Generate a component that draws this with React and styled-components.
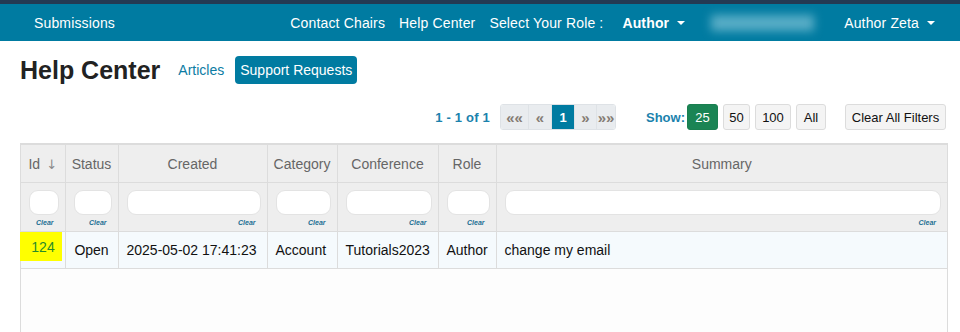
import React from 'react';
import styled, { createGlobalStyle } from 'styled-components';

const GlobalStyle = createGlobalStyle`
  body {
    margin: 0;
    background: #fff;
    font-family: "Liberation Sans", Arial, sans-serif;
    font-size: 14px;
    color: #111;
  }
`;

const TopStrip = styled.div`
  height: 4px;
  background: #243a53;
`;

const NavBar = styled.nav`
  height: 37px;
  background: #007ba1;
  display: flex;
  align-items: center;
  padding: 0 25px 0 34px;
  color: #fff;
  font-size: 14px;
  letter-spacing: 0.15px;
`;

const NavLeft = styled.div`
  flex: 1;
`;

const NavItem = styled.span`
  margin-left: ${p => p.gap ?? 15}px;
  font-weight: ${p => (p.bold ? 700 : 400)};
  display: inline-flex;
  align-items: center;
  white-space: nowrap;
`;

const Caret = styled.span`
  display: inline-block;
  margin-left: 8px;
  width: 0;
  height: 0;
  border-left: 4px solid transparent;
  border-right: 4px solid transparent;
  border-top: 4px solid #fff;
`;

const Blurred = styled.span`
  display: inline-block;
  margin-left: 26px;
  width: 103px;
  height: 16px;
  background: rgba(160, 215, 230, 0.55);
  filter: blur(5px);
`;

const Page = styled.div`
  padding: 0 12px 0 20px;
`;

const TitleRow = styled.div`
  display: flex;
  align-items: center;
  height: 58px;
`;

const Title = styled.h1`
  margin: 0;
  font-size: 25px;
  font-weight: 700;
  color: #222;
`;

const TabLink = styled.span`
  margin-left: ${p => p.gap}px;
  font-size: 14px;
  padding: 5px ${p => (p.active ? 5 : 4)}px;
  border-radius: 4px;
  color: ${p => (p.active ? '#fff' : '#0c7ca3')};
  background: ${p => (p.active ? '#007ba1' : 'transparent')};
  line-height: 18px;
`;

const ToolRow = styled.div`
  display: flex;
  justify-content: flex-end;
  align-items: center;
  height: 26px;
  margin-top: 5px;
  padding-right: 2px;
`;

const CountText = styled.span`
  color: #1b82ad;
  font-weight: 700;
  font-size: 13px;
  letter-spacing: 0.2px;
  margin-right: 10px;
`;

const Pager = styled.div`
  display: flex;
  height: 26px;
  border: 1px solid #dee2e6;
  border-radius: 3px;
  overflow: hidden;
  box-sizing: border-box;
`;

const PageBtn = styled.span`
  width: ${p => p.w}px;
  display: flex;
  align-items: center;
  justify-content: center;
  font-size: ${p => (p.active ? 13 : 15)}px;
  font-weight: 700;
  color: ${p => (p.active ? '#fff' : '#857c74')};
  background: ${p => (p.active ? '#007ba1' : '#e9ecef')};
  border-left: ${p => (p.first ? 'none' : '1px solid #dee2e6')};
  box-sizing: border-box;
`;

const ShowLabel = styled.span`
  color: #1b82ad;
  font-weight: 700;
  font-size: 13px;
  margin-left: 30px;
  margin-right: 2px;
`;

const SizeBtn = styled.span`
  box-sizing: border-box;
  height: 26px;
  width: ${p => p.w}px;
  margin-left: ${p => p.gap ?? 5}px;
  display: flex;
  align-items: center;
  justify-content: center;
  border-radius: 3px;
  font-size: 13px;
  white-space: nowrap;
  border: 1px solid ${p => (p.active ? '#1a7f50' : '#dcdcdc')};
  background: ${p => (p.active ? '#1a8454' : '#f4f4f4')};
  color: ${p => (p.active ? '#fff' : '#111')};
`;

const TableWrap = styled.div`
  margin-top: 13px;
  border: 1px solid #dcdcdc;
  border-top-width: 2px;
  height: 200px;
  width: 926px;
  background: #fdfdfd;
`;

const Table = styled.table`
  border-collapse: collapse;
  table-layout: fixed;
  width: 100%;
`;

const Th = styled.th`
  background: #eeeeee;
  color: #666;
  font-weight: 400;
  font-size: 14px;
  height: 37px;
  padding: 0;
  text-align: center;
  border-right: 1px solid #dcdcdc;
  border-bottom: 1px solid #dcdcdc;
  &:last-child { border-right: none; }
`;

const SortArrow = styled.span`
  margin-left: 6px;
  color: #8a8a8a;
  font-family: "DejaVu Sans", sans-serif;
  font-size: 13px;
`;

const FilterCell = styled.td`
  background: #eeeeee;
  height: 49px;
  padding: 7px 6px 0 8px;
  vertical-align: top;
  box-sizing: border-box;
  border-right: 1px solid #dcdcdc;
  border-bottom: 1px solid #dcdcdc;
  &:last-child { border-right: none; }
`;

const FilterInput = styled.div`
  height: 25px;
  background: #fff;
  border: 1px solid #e3e3e3;
  border-radius: 9px;
  box-sizing: border-box;
`;

const ClearLink = styled.div`
  text-align: right;
  font-size: 7px;
  font-weight: 700;
  font-style: italic;
  color: #1b6f93;
  margin-top: 4px;
  padding-right: 5px;
`;

const Td = styled.td`
  background: #f5fafd;
  height: 36px;
  padding: 0 8px;
  font-size: 14px;
  color: #111;
  white-space: nowrap;
  text-align: ${p => p.align || 'left'};
  border-right: 1px solid #dcdcdc;
  border-bottom: 1px solid #dcdcdc;
  &:last-child { border-right: none; }
`;

const IdTd = styled.td`
  background: #f5fafd;
  padding: 0;
  border-right: 1px solid #dcdcdc;
  border-bottom: 1px solid #dcdcdc;
`;

const IdMark = styled.div`
  width: 42px;
  height: 29px;
  margin-bottom: 7px;
  margin-left: -1px;
  background: #ffff00;
  color: #2a8a2a;
  display: flex;
  align-items: center;
  justify-content: center;
  font-size: 14px;
  padding-left: 4px;
  box-sizing: border-box;
`;

const columns = [
  { key: 'id', label: 'Id', width: 44 },
  { key: 'status', label: 'Status', width: 53 },
  { key: 'created', label: 'Created', width: 149 },
  { key: 'category', label: 'Category', width: 70 },
  { key: 'conference', label: 'Conference', width: 101 },
  { key: 'role', label: 'Role', width: 58 },
  { key: 'summary', label: 'Summary' },
];

const pages = [
  { label: '««', w: 27 },
  { label: '«', w: 23 },
  { label: '1', w: 23, active: true },
  { label: '»', w: 22 },
  { label: '»»', w: 19 },
];

const sizes = [
  { label: '25', w: 31, active: true },
  { label: '50', w: 27 },
  { label: '100', w: 36 },
  { label: 'All', w: 30 },
];

const row = {
  id: '124',
  status: 'Open',
  created: '2025-05-02 17:41:23',
  category: 'Account',
  conference: 'Tutorials2023',
  role: 'Author',
  summary: 'change my email',
};

export default function App() {
  return (
    <>
      <GlobalStyle />
      <TopStrip />
      <NavBar>
        <NavLeft>Submissions</NavLeft>
        <NavItem gap={0}>Contact Chairs</NavItem>
        <NavItem gap={14}>Help Center</NavItem>
        <NavItem gap={14}>Select Your Role :</NavItem>
        <NavItem gap={19} bold>
          Author <Caret />
        </NavItem>
        <Blurred />
        <NavItem gap={30}>
          Author Zeta <Caret />
        </NavItem>
      </NavBar>
      <Page>
        <TitleRow>
          <Title>Help Center</Title>
          <TabLink gap={14}>Articles</TabLink>
          <TabLink gap={7} active>Support Requests</TabLink>
        </TitleRow>
        <ToolRow>
          <CountText>1 - 1 of 1</CountText>
          <Pager>
            {pages.map((p, i) => (
              <PageBtn key={i} w={p.w} first={i === 0} active={p.active}>
                {p.label}
              </PageBtn>
            ))}
          </Pager>
          <ShowLabel>Show:</ShowLabel>
          {sizes.map((s, i) => (
            <SizeBtn key={s.label} w={s.w} active={s.active} gap={i === 0 ? 0 : 5}>
              {s.label}
            </SizeBtn>
          ))}
          <SizeBtn gap={19} w={101}>Clear All Filters</SizeBtn>
        </ToolRow>
        <TableWrap>
          <Table>
            <colgroup>
              {columns.map(c => (
                <col key={c.key} style={c.width ? { width: c.width } : undefined} />
              ))}
            </colgroup>
            <thead>
              <tr>
                {columns.map(c => (
                  <Th key={c.key}>
                    {c.label}
                    {c.key === 'id' && <SortArrow>↓</SortArrow>}
                  </Th>
                ))}
              </tr>
              <tr>
                {columns.map(c => (
                  <FilterCell key={c.key}>
                    <FilterInput />
                    <ClearLink>Clear</ClearLink>
                  </FilterCell>
                ))}
              </tr>
            </thead>
            <tbody>
              <tr>
                <IdTd>
                  <IdMark>{row.id}</IdMark>
                </IdTd>
                <Td align="center">{row.status}</Td>
                <Td>{row.created}</Td>
                <Td>{row.category}</Td>
                <Td>{row.conference}</Td>
                <Td>{row.role}</Td>
                <Td>{row.summary}</Td>
              </tr>
            </tbody>
          </Table>
        </TableWrap>
      </Page>
    </>
  );
}
